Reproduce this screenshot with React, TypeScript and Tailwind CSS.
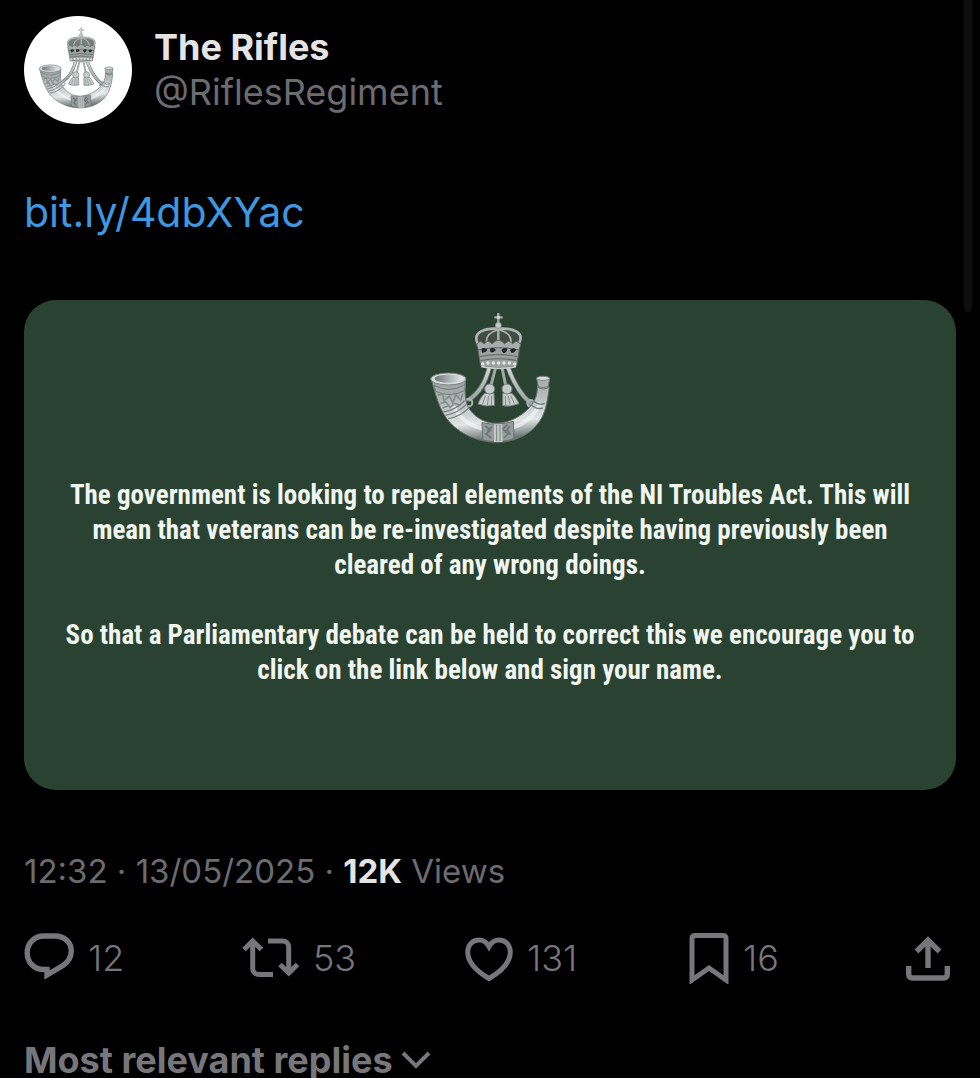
import type { ReactNode } from "react";

const crownPearls = [188, 204, 220, 236, 252, 268, 284];

function RegimentBadge({ id, className }: { id: string; className: string }) {
  const silver = `${id}-silver`;
  const bell = `${id}-bell`;
  const cord = `${id}-cord`;

  return (
    <svg viewBox="28 18 364 396" className={className} role="img" aria-label="The Rifles badge">
      <defs>
        <linearGradient id={silver} x1="0" y1="0" x2="0.15" y2="1">
          <stop offset="0" stopColor="#939b9b" />
          <stop offset="0.45" stopColor="#b9c1c1" />
          <stop offset="0.75" stopColor="#e2e6e6" />
          <stop offset="1" stopColor="#6f7878" />
        </linearGradient>
        <linearGradient id={bell} x1="0" y1="0" x2="1" y2="0">
          <stop offset="0" stopColor="#6f7777" />
          <stop offset="0.6" stopColor="#b5bcbc" />
          <stop offset="1" stopColor="#e6e9e9" />
        </linearGradient>
        <linearGradient id={cord} x1="0" y1="0" x2="0" y2="1">
          <stop offset="0" stopColor="#cfd6d3" />
          <stop offset="1" stopColor="#9ba5a1" />
        </linearGradient>
      </defs>

      {/* cords */}
      <g fill="none" strokeLinecap="round">
        <path d="M208 184C198 224 182 258 148 280" stroke="#69736f" strokeWidth="15" />
        <path d="M264 184C278 224 300 264 332 292" stroke="#69736f" strokeWidth="15" />
        <path d="M208 184C198 224 182 258 148 280" stroke={`url(#${cord})`} strokeWidth="10" />
        <path d="M264 184C278 224 300 264 332 292" stroke={`url(#${cord})`} strokeWidth="10" />
        <path d="M227 184L213 238M246 184L257 238" stroke="#9fa8a5" strokeWidth="9" />
        <circle cx="146" cy="290" r="11" stroke="#a9b1ae" strokeWidth="6" />
        <circle cx="332" cy="292" r="10" stroke="#a9b1ae" strokeWidth="6" />
      </g>

      {/* tassels */}
      <g fill="#c6cccb" stroke="#727c7a" strokeWidth="3">
        <path d="M194 262C184 272 178 282 174 294Q198 304 224 298L222 262Z" />
        <path d="M248 262L248 299Q272 304 297 293C291 280 284 270 276 262Z" />
        <circle cx="209" cy="249" r="15" />
        <circle cx="261" cy="249" r="15" />
      </g>
      <path
        d="M196 270L188 294M206 270L202 297M215 270L214 298M256 270L257 298M265 270L270 297M273 270L283 293"
        stroke="#858f8d"
        strokeWidth="3"
      />

      {/* horn */}
      <path
        d="M34 220C44 256 58 318 92 352C124 386 176 409 232 409C292 408 342 380 366 334C380 306 383 276 388 244L352 240C352 262 350 274 334 298C310 328 272 350 230 352C190 352 160 330 144 302C134 282 134 252 137 218Z"
        fill={`url(#${silver})`}
        stroke="#68716f"
        strokeWidth="3"
      />
      <path
        d="M100 300C122 346 170 372 222 373C290 372 336 346 362 290"
        fill="none"
        stroke="#f8fafa"
        strokeWidth="12"
        opacity="0.6"
      />

      {/* bell of the horn */}
      <path d="M42 238Q86 264 136 236L134 254Q90 276 47 256Z" fill="#a3abaa" stroke="#737c7a" strokeWidth="3" />
      <ellipse cx="85" cy="219" rx="53" ry="18" fill="#d5dada" stroke="#7b8482" strokeWidth="3" />
      <ellipse cx="86" cy="218" rx="42" ry="12" fill={`url(#${bell})`} />
      <path
        d="M54 268L68 264L72 284L88 270L98 290L108 266L122 282L128 264M62 292L78 288L90 304L104 292L122 298M68 306L84 300"
        fill="none"
        stroke="#858f8d"
        strokeWidth="5"
      />
      <path
        d="M70 318Q106 312 134 284M76 328Q114 322 142 292M84 338Q122 332 148 304"
        fill="none"
        stroke="#79827f"
        strokeWidth="4"
      />

      {/* mouthpiece */}
      <path d="M350 218L356 246Q370 252 384 246L389 218Z" fill="#aab2b0" stroke="#6d7674" strokeWidth="3" />
      <ellipse cx="369" cy="217" rx="20" ry="6" fill="#d9dedd" stroke="#7b8482" strokeWidth="3" />
      <path d="M353 240Q368 250 386 240M340 284Q356 300 374 292M334 296Q350 312 368 306" fill="none" stroke="#757e7c" strokeWidth="4" />

      {/* centre band */}
      <path d="M186 350Q232 360 280 346L282 398Q236 414 188 402Z" fill="#949d9b" stroke="#68716f" strokeWidth="3" />
      <path
        d="M196 360L212 372L198 384L214 396M216 362L202 374M262 356L248 370L264 384L252 396M270 360L256 376M272 386L260 370"
        fill="none"
        stroke="#6f7876"
        strokeWidth="5"
      />
      <path d="M222 355L246 354L248 408L222 408Z" fill="#c2c9c7" />
      <path d="M230 356V406M240 356V406" stroke="#7c8583" strokeWidth="3" />

      {/* crown */}
      <path
        d="M172 106C160 74 200 66 234 70C268 66 316 74 298 106L288 182Q236 192 184 182Z"
        fill="#4b5250"
        opacity="0.75"
      />
      <g fill="none" stroke="#adb4b2" strokeLinecap="round">
        <path d="M172 110C158 78 196 66 230 68M298 110C314 78 276 66 240 68" strokeWidth="8" />
        <path d="M200 112C196 90 212 78 232 72M272 112C276 90 260 78 240 72" strokeWidth="5" />
        <path d="M235 70V116" strokeWidth="7" />
      </g>
      <path
        d="M170 116Q180 98 192 114Q204 98 216 114Q236 92 254 114Q266 98 278 114Q290 98 302 116L296 134H176Z"
        fill="#a6adab"
        stroke="#5c6462"
        strokeWidth="3"
      />
      <path d="M174 132Q236 118 298 132L290 180Q236 190 182 180Z" fill="#9aa19f" stroke="#5c6462" strokeWidth="3" />
      <path
        d="M184 128Q194 122 202 132Q196 142 186 140ZM210 128Q220 122 228 132Q220 142 211 138ZM244 132Q252 122 262 128Q262 138 250 142ZM270 132Q280 122 288 130Q286 142 274 140Z"
        fill="#222827"
      />
      <path d="M180 152Q236 140 292 152M182 164Q236 152 290 164" fill="none" stroke="#69716f" strokeWidth="4" />
      {crownPearls.map((x) => (
        <circle key={x} cx={x} cy={x === 188 || x === 284 ? 174 : 171} r="5" fill="#e6e9e8" />
      ))}
      <path d="M184 182Q236 192 288 182" fill="none" stroke="#c3c9c7" strokeWidth="5" />

      {/* orb and cross */}
      <circle cx="235" cy="58" r="9" fill="#c3c9c8" stroke="#7d8785" strokeWidth="2" />
      <path d="M235 21V50M223 34H248" stroke="#a6adab" strokeWidth="7" />
      <circle cx="235" cy="34" r="5" fill="#d2d7d6" />
    </svg>
  );
}

function ReplyIcon() {
  return (
    <svg viewBox="0 0 50 52" className="h-[52px] w-[50px]" fill="none" stroke="currentColor" strokeWidth="5.4" aria-hidden="true">
      <path d="M20 4H31C40.5 4 47.3 10.5 47.3 19C47.3 25.5 44 30 39 33.5L23 43V37.5H20C10 37.5 3.2 30.5 3.2 20.7C3.2 11 10.5 4 20 4Z" />
    </svg>
  );
}

function RepostIcon() {
  return (
    <svg viewBox="0 0 58 52" className="h-[52px] w-[58px]" fill="none" stroke="currentColor" strokeWidth="5" aria-hidden="true">
      <path d="M11.7 9V36.5A6 6 0 0 0 17.7 42.5H32M3 17.5L11.7 9L20.5 17.5" />
      <path d="M27 9H41.7A6 6 0 0 1 47.7 15V41M39 32.5L47.7 41L56.5 32.5" />
    </svg>
  );
}

function LikeIcon() {
  return (
    <svg viewBox="0 0 48 52" className="h-[52px] w-12" fill="none" stroke="currentColor" strokeWidth="5" aria-hidden="true">
      <path d="M24 14.5C21.5 10 18 8 14 8C7.5 8 2.7 13 2.7 20C2.7 30.5 12 39.5 24 46.5C36 39.5 45.3 30.5 45.3 20C45.3 13 40.5 8 34 8C30 8 26.5 10 24 14.5Z" />
    </svg>
  );
}

function BookmarkIcon() {
  return (
    <svg viewBox="0 0 40 52" className="h-[52px] w-10" fill="none" stroke="currentColor" strokeWidth="5" aria-hidden="true">
      <path d="M3 6.5Q3 3.5 6 3.5H34Q37 3.5 37 6.5V48L20 36L3 48Z" />
    </svg>
  );
}

function ShareIcon() {
  return (
    <svg viewBox="0 0 44 52" className="h-[52px] w-11" fill="none" stroke="currentColor" strokeWidth="5.4" aria-hidden="true">
      <path d="M22 36V8M10.5 19.5L22 8L33.5 19.5" />
      <path d="M2.7 34V42Q2.7 46 6.7 46H37.3Q41.3 46 41.3 42V34" />
    </svg>
  );
}

type ActionProps = {
  label: string;
  count?: string;
  children: ReactNode;
};

function Action({ label, count, children }: ActionProps) {
  return (
    <button type="button" aria-label={label} className="flex items-center gap-3.5 text-4xl leading-[44px] font-light">
      {children}
      {count && <span>{count}</span>}
    </button>
  );
}

export default function App() {
  return (
    <main className="relative min-h-screen overflow-hidden bg-black px-6 pt-4 font-['Inter',sans-serif] text-[#76767b]">
      <div className="absolute right-2 top-0 h-[312px] w-2 rounded-b-full bg-[#0e0e0e]" />

      <article>
        <header className="flex items-start gap-[22px]">
          <div className="flex size-[108px] shrink-0 items-center justify-center rounded-full bg-white pr-1 pb-1">
            <RegimentBadge id="avatar" className="h-[82px] w-[76px]" />
          </div>
          <div className="pt-2">
            <h1 className="text-4xl leading-[46px] font-bold text-[#e4e4e4]">The Rifles</h1>
            <p className="text-4xl leading-[44px] text-[#6c6c70]">@RiflesRegiment</p>
          </div>
        </header>

        <p className="mt-16 text-[41px] leading-[48px]">
          <a href="https://bit.ly/4dbXYac" className="text-[#3f97e0]">
            bit.ly/4dbXYac
          </a>
        </p>

        <section className="mt-16 rounded-[32px] bg-[#2a4231] px-6 pt-3 pb-[102px] text-center font-['Roboto_Condensed','Roboto',sans-serif] text-[27px] leading-[35px] font-bold text-[#f0f5f0]">
          <RegimentBadge id="card" className="mx-auto h-[132px] w-[122px]" />
          <p className="mt-[34px]">
            The government is looking to repeal elements of the NI Troubles Act. This will
            <br />
            mean that veterans can be re-investigated despite having previously been
            <br />
            cleared of any wrong doings.
          </p>
          <p className="mt-[35px]">
            So that a Parliamentary debate can be held to correct this we encourage you to
            <br />
            click on the link below and sign your name.
          </p>
        </section>

        <p className="mt-[59px] text-[33px] leading-[44px] text-[#6c6c70]">
          <time dateTime="2025-05-13T12:32">12:32 · 13/05/2025</time> ·{" "}
          <strong className="font-bold text-[#e4e4e4]">12K</strong> Views
        </p>

        <div className="mt-[39px] grid grid-cols-[31fr_32fr_32fr_31fr_auto] items-center pr-1.5">
          <Action label="Reply" count="12">
            <ReplyIcon />
          </Action>
          <Action label="Repost" count="53">
            <RepostIcon />
          </Action>
          <Action label="Like" count="131">
            <LikeIcon />
          </Action>
          <Action label="Bookmark" count="16">
            <BookmarkIcon />
          </Action>
          <Action label="Share">
            <ShareIcon />
          </Action>
        </div>
      </article>

      <button type="button" className="mt-[54px] flex items-center gap-2 text-4xl leading-[44px] font-bold">
        Most relevant replies
        <svg viewBox="0 0 30 20" className="h-5 w-[30px]" fill="none" stroke="currentColor" strokeWidth="4" aria-hidden="true">
          <path d="M2 3L15 16L28 3" />
        </svg>
      </button>
    </main>
  );
}
